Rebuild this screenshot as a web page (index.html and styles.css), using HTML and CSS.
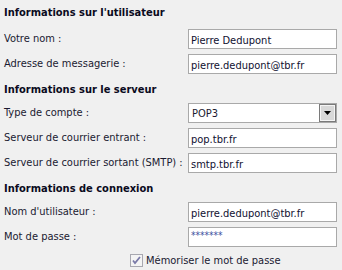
FILE: index.html
```html
<!DOCTYPE html>
<html lang="fr">
<head>
    <meta charset="UTF-8">
    <title>Paramètres du compte</title>
    <link rel="stylesheet" href="styles.css">
</head>
<body>
    <form class="account-form">
        <h2 class="section-title">Informations sur l'utilisateur</h2>
        <div class="row">
            <label class="field-label">Votre nom :</label>
            <input class="text-box" type="text" value="Pierre Dedupont">
        </div>
        <div class="row">
            <label class="field-label">Adresse de messagerie :</label>
            <input class="text-box" type="text" value="pierre.dedupont@tbr.fr">
        </div>

        <h2 class="section-title">Informations sur le serveur</h2>
        <div class="row">
            <label class="field-label">Type de compte :</label>
            <div class="combo">
                <span class="combo-value">POP3</span>
                <span class="combo-btn">
                    <svg width="7" height="4" viewBox="0 0 7 4"><path d="M0 0h7L3.5 4z" fill="#000"/></svg>
                </span>
            </div>
        </div>
        <div class="row">
            <label class="field-label">Serveur de courrier entrant :</label>
            <input class="text-box" type="text" value="pop.tbr.fr">
        </div>
        <div class="row">
            <label class="field-label">Serveur de courrier sortant (SMTP) :</label>
            <input class="text-box" type="text" value="smtp.tbr.fr">
        </div>

        <h2 class="section-title">Informations de connexion</h2>
        <div class="row">
            <label class="field-label">Nom d'utilisateur :</label>
            <input class="text-box" type="text" value="pierre.dedupont@tbr.fr">
        </div>
        <div class="row">
            <label class="field-label">Mot de passe :</label>
            <input class="text-box password" type="text" value="*******">
        </div>

        <label class="remember">
            <span class="check">
                <svg width="13" height="13" viewBox="0 0 13 13">
                    <rect x="0.5" y="0.5" width="12" height="12" fill="#f4f4f4" stroke="#a8a8b0"/>
                    <path d="M3 6.5l2 2.5 5-6" fill="none" stroke="#7a7aa8" stroke-width="1.8"/>
                </svg>
            </span>
            Mémoriser le mot de passe
        </label>
    </form>
</body>
</html>
```

FILE: styles.css
```css
body {
    margin: 0;
    background-color: #f0f0f0;
    font-family: "DejaVu Sans Condensed", "DejaVu Sans", sans-serif;
    font-size: 11px;
    color: #1a1a30;
}

.account-form {
    padding: 6px 5px 0 4px;
}

.section-title {
    margin: 9px 0 7px;
    font-size: 11px;
    line-height: 13px;
    font-weight: bold;
    color: #0a0a20;
}

.section-title:first-child {
    margin: 0 0 10px;
}

.row {
    display: grid;
    grid-template-columns: 184px 149px;
    align-items: start;
    margin-bottom: 5px;
}

.field-label {
    padding-top: 3px;
    line-height: 13px;
    white-space: nowrap;
}

.text-box {
    box-sizing: border-box;
    width: 149px;
    height: 20px;
    margin: 0;
    padding: 2px 2px 0;
    border: 1px solid #a9a9a9;
    background-color: white;
    font-family: inherit;
    font-size: 11px;
    color: #101030;
    outline: none;
}

.password {
    padding: 0 2px 4px;
    color: #4050a0;
    font-size: 10px;
}

.combo {
    box-sizing: border-box;
    display: flex;
    align-items: center;
    justify-content: space-between;
    height: 20px;
    padding-left: 3px;
    border: 1px solid #a9a9a9;
    background-color: white;
}

.combo-btn {
    display: flex;
    align-items: center;
    justify-content: center;
    box-sizing: border-box;
    width: 17px;
    height: 18px;
    border: 1px solid #7a7a7a;
    box-shadow: inset 0 0 0 1px #f4f4f4;
    background-color: #d8d8d8;
}

.remember {
    display: flex;
    align-items: center;
    gap: 3px;
    padding-left: 126px;
    margin-top: 7px;
}

.check {
    display: flex;
}
```
